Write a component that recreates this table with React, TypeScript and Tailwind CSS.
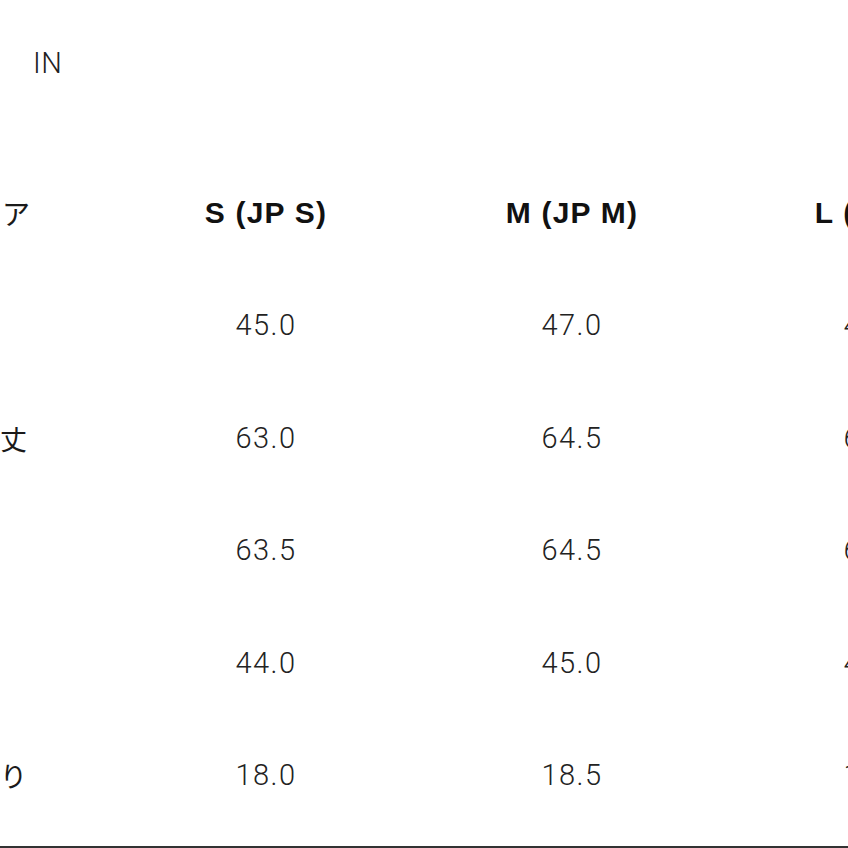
const header = ['S (JP S)', 'M (JP M)', 'L (JP L)'];

const rows = [
  { label: '', values: ['45.0', '47.0', '49.0'] },
  { label: '丈', values: ['63.0', '64.5', '66.0'] },
  { label: '', values: ['63.5', '64.5', '65.5'] },
  { label: '', values: ['44.0', '45.0', '46.0'] },
  { label: 'り', values: ['18.0', '18.5', '19.0'] },
];

const jp = { fontFamily: '"Noto Sans CJK JP", "Liberation Sans", sans-serif' };

export default function App() {
  return (
    <div className="w-[848px] h-[848px] bg-white overflow-hidden flex flex-col text-[#222]">
      <div
        className="h-[83px] pt-[43px] pl-[33px] text-[29px] leading-[40px] font-light tracking-[0.5px]"
        style={{ fontFamily: 'Roboto, "Liberation Sans", sans-serif' }}
      >
        IN
      </div>

      <div className="mt-[74px] w-[1023px] flex flex-col">
        <div className="h-[112.5px] grid grid-cols-[113px_306px_306px_298px] items-center">
          <div className="pl-[2px] text-[28px] leading-none font-normal text-[#1a1a1a]" style={jp}>
            ア
          </div>
          {header.map((h) => (
            <div
              key={h}
              className="text-center text-[30px] leading-none font-bold tracking-[1.2px] text-[#111]"
              style={{ fontFamily: '"Liberation Sans", Arial, sans-serif' }}
            >
              {h}
            </div>
          ))}
        </div>

        {rows.map((r, i) => (
          <div key={i} className="h-[112.5px] grid grid-cols-[113px_306px_306px_298px] items-center">
            <div className="text-[27px] leading-none font-normal text-[#1a1a1a]" style={jp}>
              {r.label}
            </div>
            {r.values.map((v, j) => (
              <div
                key={j}
                className="text-center text-[29px] leading-none font-light tracking-[1.5px] text-[#222]"
                style={{ fontFamily: 'Roboto, "Liberation Sans", sans-serif' }}
              >
                {v}
              </div>
            ))}
          </div>
        ))}
      </div>

      <div className="h-[14px]" />
      <div className="h-[2px] bg-[#333]" />
    </div>
  );
}
